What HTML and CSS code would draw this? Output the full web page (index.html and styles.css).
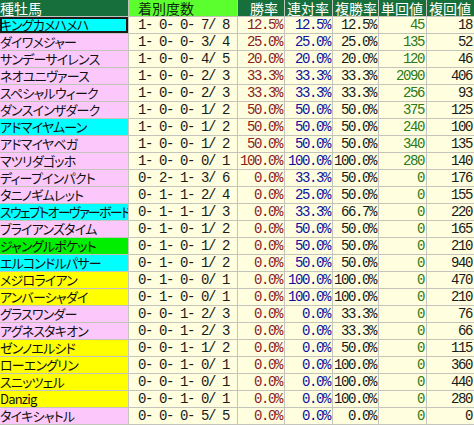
FILE: index.html
```html
<!DOCTYPE html>
<html lang="ja">
<head>
<meta charset="utf-8">
<link rel="stylesheet" href="styles.css">
</head>
<body>
<div class="sheet">
  <div class="hd hd-name">種牡馬</div>
  <div class="hd hd-rec">着別度数</div>
  <div class="hd hd-win">勝率</div>
  <div class="hd">連対率</div>
  <div class="hd">複勝率</div>
  <div class="hd">単回値</div>
  <div class="hd">複回値</div>

  <div class="nm cyan sel">キングカメハメハ</div><div class="rec">1- 0- 0- 7/ 8</div><div class="num win">12.5%</div><div class="num ren">12.5%</div><div class="num fuku">12.5%</div><div class="num tan">45</div><div class="num fk">18</div>
  <div class="nm pink">ダイワメジャー</div><div class="rec">1- 0- 0- 3/ 4</div><div class="num win">25.0%</div><div class="num ren">25.0%</div><div class="num fuku">25.0%</div><div class="num tan">135</div><div class="num fk">52</div>
  <div class="nm pink">サンデーサイレンス</div><div class="rec">1- 0- 0- 4/ 5</div><div class="num win">20.0%</div><div class="num ren">20.0%</div><div class="num fuku">20.0%</div><div class="num tan">120</div><div class="num fk">46</div>
  <div class="nm pink">ネオユニヴァース</div><div class="rec">1- 0- 0- 2/ 3</div><div class="num win">33.3%</div><div class="num ren">33.3%</div><div class="num fuku">33.3%</div><div class="num tan">2090</div><div class="num fk">406</div>
  <div class="nm pink">スペシャルウィーク</div><div class="rec">1- 0- 0- 2/ 3</div><div class="num win">33.3%</div><div class="num ren">33.3%</div><div class="num fuku">33.3%</div><div class="num tan">256</div><div class="num fk">93</div>
  <div class="nm pink">ダンスインザダーク</div><div class="rec">1- 0- 0- 1/ 2</div><div class="num win">50.0%</div><div class="num ren">50.0%</div><div class="num fuku">50.0%</div><div class="num tan">375</div><div class="num fk">125</div>
  <div class="nm cyan">アドマイヤムーン</div><div class="rec">1- 0- 0- 1/ 2</div><div class="num win">50.0%</div><div class="num ren">50.0%</div><div class="num fuku">50.0%</div><div class="num tan">240</div><div class="num fk">100</div>
  <div class="nm pink">アドマイヤベガ</div><div class="rec">1- 0- 0- 1/ 2</div><div class="num win">50.0%</div><div class="num ren">50.0%</div><div class="num fuku">50.0%</div><div class="num tan">340</div><div class="num fk">135</div>
  <div class="nm pink">マツリダゴッホ</div><div class="rec">1- 0- 0- 0/ 1</div><div class="num win">100.0%</div><div class="num ren">100.0%</div><div class="num fuku">100.0%</div><div class="num tan">280</div><div class="num fk">140</div>
  <div class="nm pink">ディープインパクト</div><div class="rec">0- 2- 1- 3/ 6</div><div class="num win">0.0%</div><div class="num ren">33.3%</div><div class="num fuku">50.0%</div><div class="num tan">0</div><div class="num fk">176</div>
  <div class="nm pink">タニノギムレット</div><div class="rec">0- 1- 1- 2/ 4</div><div class="num win">0.0%</div><div class="num ren">25.0%</div><div class="num fuku">50.0%</div><div class="num tan">0</div><div class="num fk">155</div>
  <div class="nm cyan tight">スウェプトオーヴァーボード</div><div class="rec">0- 1- 1- 1/ 3</div><div class="num win">0.0%</div><div class="num ren">33.3%</div><div class="num fuku">66.7%</div><div class="num tan">0</div><div class="num fk">220</div>
  <div class="nm pink">ブライアンズタイム</div><div class="rec">0- 1- 0- 1/ 2</div><div class="num win">0.0%</div><div class="num ren">50.0%</div><div class="num fuku">50.0%</div><div class="num tan">0</div><div class="num fk">165</div>
  <div class="nm green">ジャングルポケット</div><div class="rec">0- 1- 0- 1/ 2</div><div class="num win">0.0%</div><div class="num ren">50.0%</div><div class="num fuku">50.0%</div><div class="num tan">0</div><div class="num fk">210</div>
  <div class="nm cyan">エルコンドルパサー</div><div class="rec">0- 1- 0- 1/ 2</div><div class="num win">0.0%</div><div class="num ren">50.0%</div><div class="num fuku">50.0%</div><div class="num tan">0</div><div class="num fk">940</div>
  <div class="nm yellow">メジロライアン</div><div class="rec">0- 1- 0- 0/ 1</div><div class="num win">0.0%</div><div class="num ren">100.0%</div><div class="num fuku">100.0%</div><div class="num tan">0</div><div class="num fk">470</div>
  <div class="nm yellow">アンバーシャダイ</div><div class="rec">0- 1- 0- 0/ 1</div><div class="num win">0.0%</div><div class="num ren">100.0%</div><div class="num fuku">100.0%</div><div class="num tan">0</div><div class="num fk">210</div>
  <div class="nm pink">グラスワンダー</div><div class="rec">0- 0- 1- 2/ 3</div><div class="num win">0.0%</div><div class="num ren">0.0%</div><div class="num fuku">33.3%</div><div class="num tan">0</div><div class="num fk">76</div>
  <div class="nm pink">アグネスタキオン</div><div class="rec">0- 0- 1- 2/ 3</div><div class="num win">0.0%</div><div class="num ren">0.0%</div><div class="num fuku">33.3%</div><div class="num tan">0</div><div class="num fk">66</div>
  <div class="nm yellow">ゼンノエルシド</div><div class="rec">0- 0- 1- 1/ 2</div><div class="num win">0.0%</div><div class="num ren">0.0%</div><div class="num fuku">50.0%</div><div class="num tan">0</div><div class="num fk">115</div>
  <div class="nm yellow">ローエングリン</div><div class="rec">0- 0- 1- 0/ 1</div><div class="num win">0.0%</div><div class="num ren">0.0%</div><div class="num fuku">100.0%</div><div class="num tan">0</div><div class="num fk">360</div>
  <div class="nm yellow">スニッツェル</div><div class="rec">0- 0- 1- 0/ 1</div><div class="num win">0.0%</div><div class="num ren">0.0%</div><div class="num fuku">100.0%</div><div class="num tan">0</div><div class="num fk">440</div>
  <div class="nm yellow">Danzig</div><div class="rec">0- 0- 1- 0/ 1</div><div class="num win">0.0%</div><div class="num ren">0.0%</div><div class="num fuku">100.0%</div><div class="num tan">0</div><div class="num fk">280</div>
  <div class="nm pink">タイキシャトル</div><div class="rec">0- 0- 0- 5/ 5</div><div class="num win">0.0%</div><div class="num ren">0.0%</div><div class="num fuku">0.0%</div><div class="num tan">0</div><div class="num fk">0</div>
</div>
</body>
</html>
```

FILE: styles.css
```css
html, body {
  margin: 0;
  padding: 0;
  background: #ffffff;
}

.sheet {
  display: grid;
  grid-template-columns: 128px 108px 46px 47px 45px 47px 47px;
  grid-auto-rows: 16px;
  gap: 1px;
  background: #c4c4bc;
  width: 474px;
  height: 425px;
  overflow: hidden;
  font-family: "Noto Sans CJK JP", "Noto Sans", sans-serif;
}

.hd {
  background: #17703c;
  color: #ffffff;
  font-size: 14px;
  line-height: 16px;
  text-align: left;
  padding-left: 2px;
  white-space: nowrap;
  overflow: hidden;
}

.hd-name {
  padding-left: 0;
}

.hd-rec {
  background: #5cff2e;
  color: #0d2a0d;
  padding-left: 9px;
}

.hd-win {
  padding-left: 12px;
}

.nm {
  font-size: 13px;
  line-height: 16px;
  padding-left: 0;
  white-space: nowrap;
  overflow: hidden;
  color: #111111;
  font-feature-settings: "palt";
  letter-spacing: -0.8px;
}

.tight {
  letter-spacing: -1.7px;
}

.pink { background: #fcc8fc; }
.cyan { background: #00ffff; }
.yellow { background: #ffff00; }
.green { background: #00ee00; }

.sel {
  box-shadow: inset 0 0 0 2px #1a1a1a;
}

.rec,
.num {
  background: #ffffdf;
  font-family: "Liberation Mono", "DejaVu Sans Mono", monospace;
  font-size: 14px;
  letter-spacing: -1.4px;
  line-height: 16px;
  white-space: pre;
  overflow: hidden;
  color: #1a1a1a;
}

.rec {
  text-align: left;
  padding-left: 9px;
}

.num {
  text-align: right;
  padding-right: 2px;
}

.win { color: #8c1c1c; }
.ren { color: #1010a0; }
.fuku { color: #1a1a1a; }
.tan { color: #2a7a1a; }
.fk { color: #1a1a1a; }
```
